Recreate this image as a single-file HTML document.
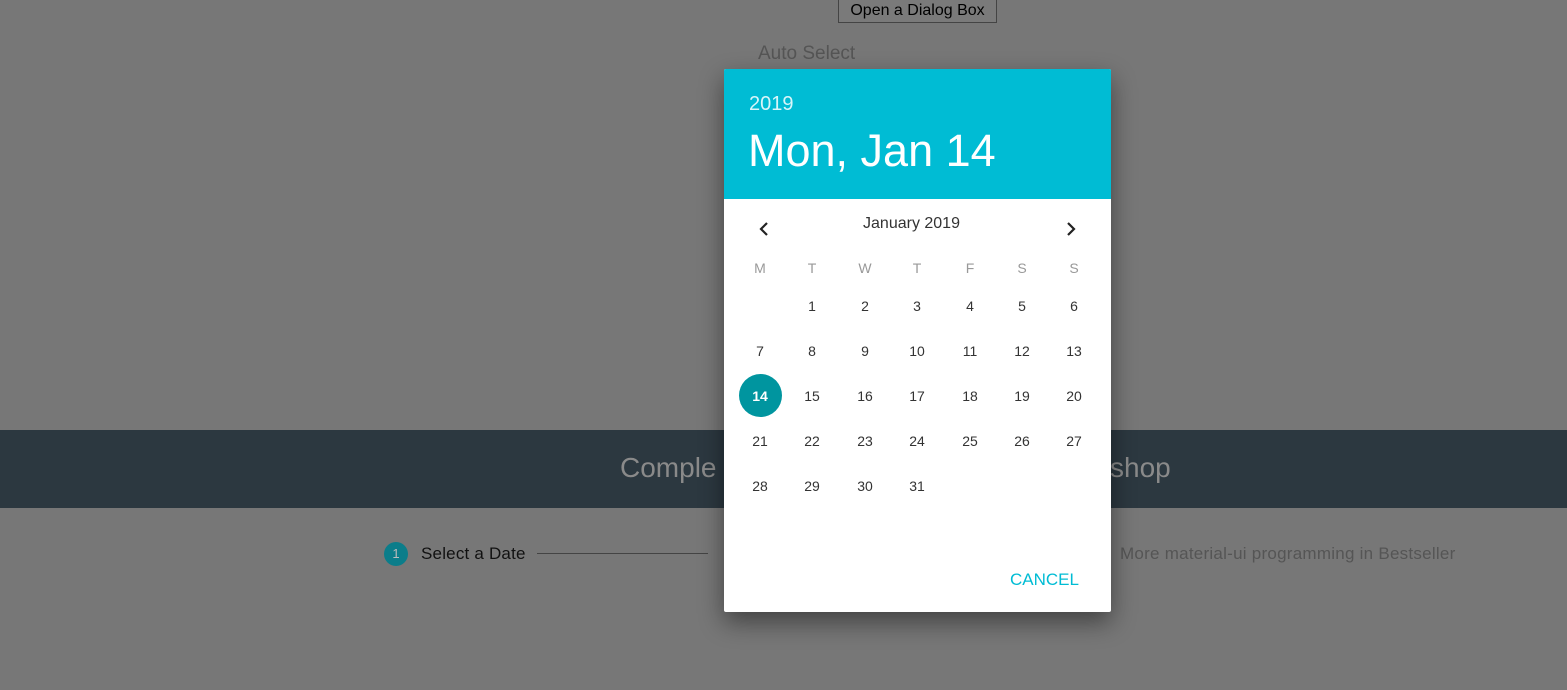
<!DOCTYPE html>
<html><head><style>
body{margin:0;width:1567px;height:690px;background:#777;font-family:"Liberation Sans",sans-serif;position:relative;overflow:hidden}
.a{position:absolute}
.btn{left:838px;top:-2px;width:159px;height:25px;border:1px solid #444;background:#7a7a7a;font-size:16px;color:#000;text-align:center;line-height:23px;box-sizing:border-box}
.band{left:0;top:430px;width:1567px;height:78px;background:#2c3840}
.dlg{left:724px;top:69px;width:387px;height:543px;background:#fff;box-shadow:0 10px 25px rgba(0,0,0,.45);border-radius:2px;overflow:hidden}
.hd{left:0;top:0;width:387px;height:130px;background:#00bcd4;color:#fff}
.d{position:absolute;width:44px;text-align:center;font-size:14px;color:#333;transform:translateX(-22px)}
</style></head><body>
<div class="a btn">Open a Dialog Box</div>
<div class="a" style="left:758px;top:43px;font-size:19px;color:#555">Auto Select</div>
<div class="a band"></div>
<div class="a" style="left:620px;top:452px;font-size:28px;color:#8a8a8a">Comple</div>
<div class="a" style="left:1110px;top:452px;font-size:28px;color:#8a8a8a">shop</div>
<div class="a" style="left:384px;top:542px;width:24px;height:24px;border-radius:50%;background:#0b7d8a;color:#bbb;font-size:13px;text-align:center;line-height:24px">1</div>
<div class="a" style="left:421px;top:544px;font-size:17px;color:#111;letter-spacing:0.2px">Select a Date</div>
<div class="a" style="left:537px;top:553px;width:171px;height:1px;background:#444"></div>
<div class="a" style="left:1120px;top:544px;font-size:17px;color:#555;letter-spacing:0.25px">More material-ui programming in Bestseller</div>
<div class="a dlg">
<div class="a hd">
<div class="a" style="left:25px;top:24px;font-size:20px;color:#d8f5f9">2019</div>
<div class="a" style="left:24px;top:56px;font-size:45px">Mon, Jan 14</div>
</div>
<svg class="a" style="left:30px;top:150px" width="20" height="20"><path d="M13 4L7 10l6 6" stroke="#222" stroke-width="2.2" fill="none"/></svg>
<svg class="a" style="left:337px;top:150px" width="20" height="20"><path d="M7 4l6 6-6 6" stroke="#222" stroke-width="2.2" fill="none"/></svg>
<div class="a" style="left:0;top:146px;width:387px;text-align:center;font-size:16px;color:#333;transform:translateX(-6px)">January 2019</div>
<div style="position:absolute;left:0;top:0">
<div class="d" style="left:36px;top:191px;color:#999">M</div><div class="d" style="left:88px;top:191px;color:#999">T</div><div class="d" style="left:141px;top:191px;color:#999">W</div><div class="d" style="left:193px;top:191px;color:#999">T</div><div class="d" style="left:246px;top:191px;color:#999">F</div><div class="d" style="left:298px;top:191px;color:#999">S</div><div class="d" style="left:350px;top:191px;color:#999">S</div>
<div class="a" style="left:15px;top:305px;width:43px;height:43px;border-radius:50%;background:#00959f"></div>
</div>
</div>
<div class="a" style="left:1010px;top:570px;font-size:17px;color:#00bcd4">CANCEL</div>
<div class="a" style="left:724px;top:69px">
<div class="d" style="left:88px;top:229px">1</div><div class="d" style="left:141px;top:229px">2</div><div class="d" style="left:193px;top:229px">3</div><div class="d" style="left:246px;top:229px">4</div><div class="d" style="left:298px;top:229px">5</div><div class="d" style="left:350px;top:229px">6</div>
<div class="d" style="left:36px;top:274px">7</div><div class="d" style="left:88px;top:274px">8</div><div class="d" style="left:141px;top:274px">9</div><div class="d" style="left:193px;top:274px">10</div><div class="d" style="left:246px;top:274px">11</div><div class="d" style="left:298px;top:274px">12</div><div class="d" style="left:350px;top:274px">13</div>
<div class="d" style="left:36px;top:319px;color:#fff;font-weight:bold">14</div><div class="d" style="left:88px;top:319px">15</div><div class="d" style="left:141px;top:319px">16</div><div class="d" style="left:193px;top:319px">17</div><div class="d" style="left:246px;top:319px">18</div><div class="d" style="left:298px;top:319px">19</div><div class="d" style="left:350px;top:319px">20</div>
<div class="d" style="left:36px;top:364px">21</div><div class="d" style="left:88px;top:364px">22</div><div class="d" style="left:141px;top:364px">23</div><div class="d" style="left:193px;top:364px">24</div><div class="d" style="left:246px;top:364px">25</div><div class="d" style="left:298px;top:364px">26</div><div class="d" style="left:350px;top:364px">27</div>
<div class="d" style="left:36px;top:409px">28</div><div class="d" style="left:88px;top:409px">29</div><div class="d" style="left:141px;top:409px">30</div><div class="d" style="left:193px;top:409px">31</div>
</div>
</body></html>
